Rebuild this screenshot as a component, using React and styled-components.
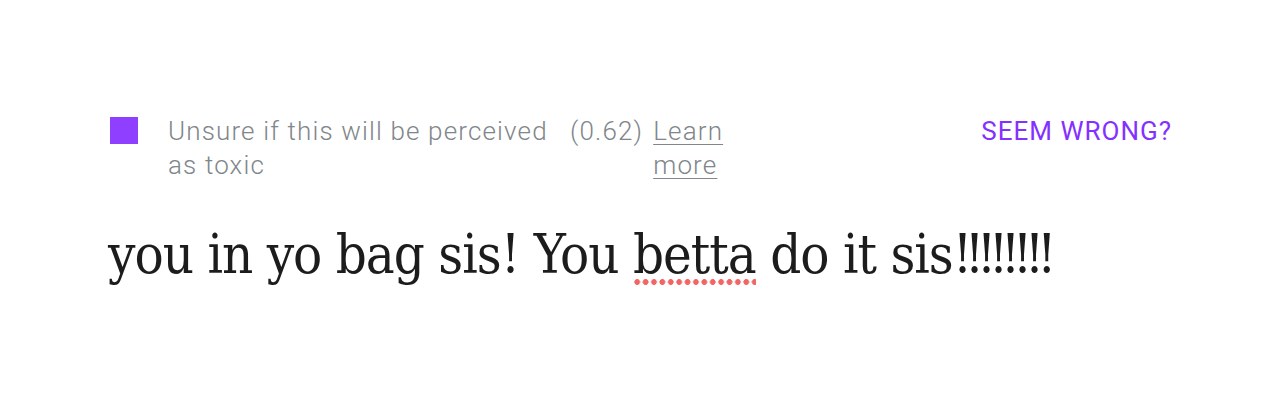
import React from "react";
import styled, { createGlobalStyle } from "styled-components";

const Global = createGlobalStyle`
  html, body { margin: 0; padding: 0; background: #fff; }
  body { font-family: Roboto, "Liberation Sans", sans-serif; }
`;

const Page = styled.div`
  width: 1278px;
  height: 402px;
  box-sizing: border-box;
  padding: 114px 106px 0 108px;
  display: flex;
  flex-direction: column;
`;

const Header = styled.div`
  display: flex;
  align-items: flex-start;
`;

const Swatch = styled.div`
  width: 28px;
  height: 27px;
  margin: 3px 30px 0 2px;
  background: #8f3fff;
  flex-shrink: 0;
`;

const Meta = styled.div`
  font-size: 26px;
  font-weight: 300;
  line-height: 34px;
  letter-spacing: 1.15px;
  color: #80868b;
  flex-shrink: 0;
`;

const Label = styled(Meta)`
  width: 390px;
`;

const Score = styled(Meta)`
  margin-left: 12px;
`;

const Learn = styled(Meta).attrs({ as: "a" })`
  margin-left: 10px;
  width: 90px;
  text-decoration: underline;
  text-underline-offset: 4px;
  text-decoration-thickness: 1px;
`;

const Wrong = styled.button`
  margin-left: auto;
  border: 0;
  background: none;
  padding: 0;
  font-family: Roboto, "Liberation Sans", sans-serif;
  font-size: 26px;
  font-weight: 400;
  line-height: 34px;
  letter-spacing: 1px;
  color: #8430ff;
`;

const Comment = styled.div`
  margin-top: 43px;
  font-family: "DejaVu Serif Condensed", "DejaVu Serif", "Liberation Serif", serif;
  font-size: 54px;
  font-weight: 300;
  line-height: 60px;
  letter-spacing: -1px;
  color: #1c1c1c;
  white-space: nowrap;
`;

const Bangs = styled.span`
  letter-spacing: -7.5px;
`;

const Misspelled = styled.span`
  background-image: radial-gradient(circle, #f26565 2.6px, transparent 3.2px);
  background-size: 8.4px 8px;
  background-repeat: repeat-x;
  background-position: 0 100%;
`;

export default function App() {
  return (
    <>
      <Global />
      <Page>
        <Header>
          <Swatch />
          <Label>Unsure if this will be perceived as toxic</Label>
          <Score>(0.62)</Score>
          <Learn>Learn more</Learn>
          <Wrong>SEEM WRONG?</Wrong>
        </Header>
        <Comment>
          you in yo bag sis! You <Misspelled>betta</Misspelled> do it sis<Bangs>!!!!!!!!</Bangs>
        </Comment>
      </Page>
    </>
  );
}
